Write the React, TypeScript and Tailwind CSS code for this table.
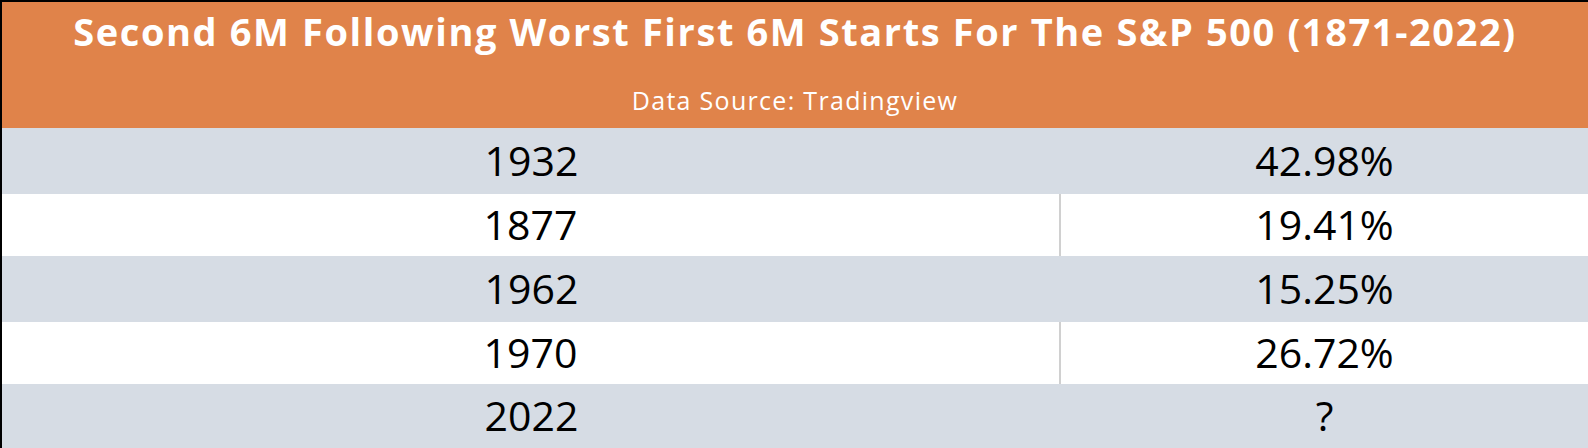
const rows = [
  { year: "1932", value: "42.98%", h: "h-[66px]", shaded: true },
  { year: "1877", value: "19.41%", h: "h-[62px]", shaded: false },
  { year: "1962", value: "15.25%", h: "h-[66px]", shaded: true },
  { year: "1970", value: "26.72%", h: "h-[62px]", shaded: false },
  { year: "2022", value: "?", h: "h-[64px]", shaded: true },
];

export default function App() {
  return (
    <div className="w-[1588px] h-[448px] bg-black pl-[2px] pt-[2px] overflow-hidden" style={{ fontFamily: '"Open Sans", sans-serif' }}>
      {/* Header */}
      <div className="h-[126px] bg-[#e0834a] flex flex-col items-center text-white">
        <div className="mt-[5px] text-[38px] font-bold leading-[48px] tracking-[1.6px] whitespace-nowrap">
          Second 6M Following Worst First 6M Starts For The S&amp;P 500 (1871-2022)
        </div>
        <div className="mt-[29px] text-[25px] leading-[32px] tracking-[1.3px]">Data Source: Tradingview</div>
      </div>

      {/* Rows */}
      {rows.map((r) => (
        <div key={r.year} className={`${r.h} flex text-[41px] text-black ${r.shaded ? "bg-[#d6dce4]" : "bg-white"}`}>
          <div className={`w-[1059px] flex items-center justify-center ${r.shaded ? "" : "border-r-2 border-[#d0d0d0]"}`}>
            {r.year}
          </div>
          <div className="flex-1 flex items-center justify-center">{r.value}</div>
        </div>
      ))}
    </div>
  );
}
